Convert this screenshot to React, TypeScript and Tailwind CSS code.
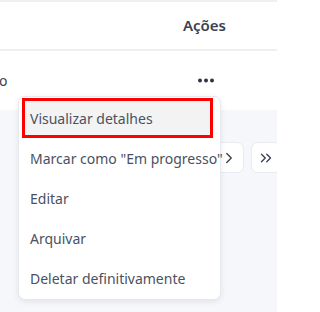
import { ChevronRight, ChevronsRight } from "lucide-react"

const items = [
  "Visualizar detalhes",
  'Marcar como "Em progresso"',
  "Editar",
  "Arquivar",
  "Deletar definitivamente",
]

export default function App() {
  return (
    <div
      className="relative h-[312px] w-[277px] overflow-hidden bg-[#f5f7fb]"
      style={{ fontFamily: '"Noto Sans", "Open Sans", sans-serif' }}
    >
      {/* tabela */}
      <div className="border-t-2 border-[#edf0f3] bg-white">
        <div className="flex h-[49px] items-center justify-end border-b-2 border-[#edf0f3] pr-[51px]">
          <span className="text-[15px] font-semibold text-[#3a4150]">Ações</span>
        </div>
        <div className="flex h-[59px] items-center justify-between pr-[63px]">
          <span className="-ml-[1px] text-[14px] text-[#3a4150]">o</span>
          <svg width="16" height="5" viewBox="0 0 16 5" className="text-[#2f3643]">
            <circle cx="2" cy="2.5" r="2" fill="currentColor" />
            <circle cx="8" cy="2.5" r="2" fill="currentColor" />
            <circle cx="14" cy="2.5" r="2" fill="currentColor" />
          </svg>
        </div>
      </div>

      {/* paginação */}
      <div className="mt-[32px] flex justify-end gap-[7px]">
        <button className="flex h-[31px] w-[30px] items-center justify-center rounded-[7px] border border-[#e8ebef] bg-white text-[#3a4150]">
          <ChevronRight size={18} strokeWidth={1.8} />
        </button>
        <button className="-mr-[4px] flex h-[31px] w-[30px] items-center justify-center rounded-[7px] border border-[#e8ebef] bg-white text-[#3a4150]">
          <ChevronsRight size={18} strokeWidth={1.8} />
        </button>
      </div>

      {/* menu */}
      <div className="absolute left-[18px] top-[96px] w-[203px] rounded-[7px] border border-[#e6e9ed] bg-white py-px pl-[3px] pr-[7px] shadow-[0_2px_6px_rgba(0,0,0,0.08)]">
        {items.map((item, i) => (
          <div
            key={item}
            className={
              i === 0
                ? "flex h-[40px] items-center whitespace-nowrap border-[3px] border-[#ff0000] bg-[#f3f3f4] pl-[5px] text-[14px] text-[#4a5160]"
                : "flex h-[40px] items-center whitespace-nowrap pl-[8px] text-[14px] text-[#4a5160]"
            }
          >
            {item}
          </div>
        ))}
      </div>
    </div>
  )
}
